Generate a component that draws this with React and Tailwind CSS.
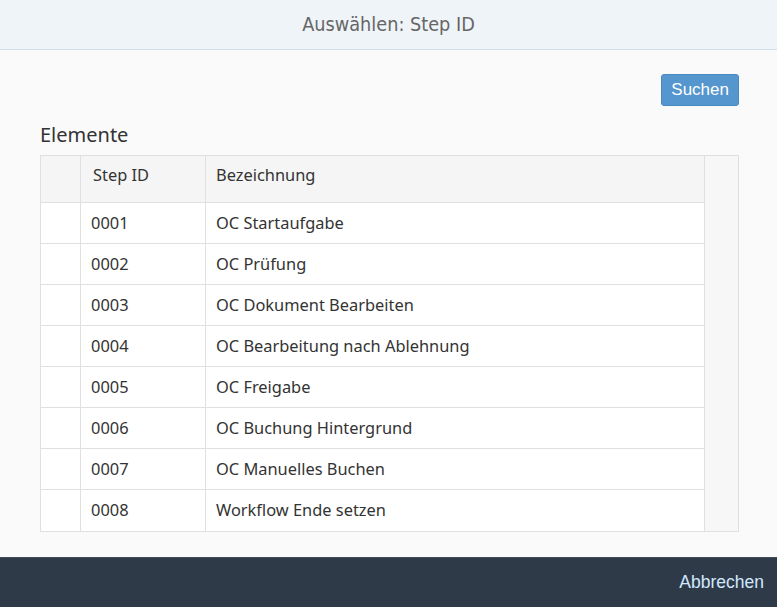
import React from "react";

const rows = [
  ["0001", "OC Startaufgabe"],
  ["0002", "OC Prüfung"],
  ["0003", "OC Dokument Bearbeiten"],
  ["0004", "OC Bearbeitung nach Ablehnung"],
  ["0005", "OC Freigabe"],
  ["0006", "OC Buchung Hintergrund"],
  ["0007", "OC Manuelles Buchen"],
  ["0008", "Workflow Ende setzen"],
];

export default function App() {
  return (
    <div
      className="w-[777px] h-[607px] flex flex-col bg-[#fafafa] overflow-hidden"
      style={{ fontFamily: '"Noto Sans", "Open Sans", sans-serif' }}
    >
      {/* Header */}
      <div className="h-[50px] shrink-0 bg-[#eff4f9] border-b border-[#d3dde8] flex items-center justify-center">
        <span
          className="text-[19.7px] text-[#666666]"
          style={{ fontFamily: '"Liberation Sans Narrow", "DejaVu Sans Condensed", "Liberation Sans", sans-serif' }}
        >
          Auswählen: Step ID
        </span>
      </div>

      {/* Body */}
      <div className="flex-1 pl-10 pr-[38px] pt-6">
        <div className="flex justify-end">
          <button
            className="h-8 px-[9px] rounded-[3px] bg-[#5496cd] border border-[#4a8ac2] text-white text-[17px]"
            style={{ fontFamily: '"Liberation Sans", Arial, sans-serif' }}
          >
            Suchen
          </button>
        </div>
        <div className="mt-[15px] text-[20px] text-[#333333] leading-[28px]">Elemente</div>
        <div className="mt-[6px] border border-[#e0e0e0] flex">
          <div className="flex-1">
            <div className="flex h-[47px] bg-[#f5f5f5] border-b border-[#e0e0e0] text-[16.4px] text-[#333333]">
              <div className="w-[40px] border-r border-[#e0e0e0]" />
              <div className="w-[125px] border-r border-[#e0e0e0] pl-3 pt-[7px]">Step ID</div>
              <div className="flex-1 border-r border-[#e0e0e0] pl-[10px] pt-[7px]">Bezeichnung</div>
            </div>
            {rows.map(([id, name], i) => (
              <div
                key={id}
                className={
                  "flex h-[41px] bg-white text-[16.4px] text-[#333333] items-center " +
                  (i < rows.length - 1 ? "border-b border-[#e0e0e0]" : "")
                }
              >
                <div className="w-[40px] h-full border-r border-[#e0e0e0]" />
                <div className="w-[125px] h-full border-r border-[#e0e0e0] pl-[10px] flex items-center">{id}</div>
                <div className="flex-1 h-full border-r border-[#e0e0e0] pl-[10px] flex items-center">{name}</div>
              </div>
            ))}
          </div>
          <div className="w-[33px] bg-[#f7f7f7]" />
        </div>
      </div>

      {/* Footer */}
      <div className="h-[50px] shrink-0 bg-[#2e3a47] border-t border-[#3f4c5a] flex items-center justify-end pr-[13px]">
        <span
          className="text-[17.5px] text-[#d1e8ff]"
          style={{ fontFamily: '"Liberation Sans", Arial, sans-serif' }}
        >
          Abbrechen
        </span>
      </div>
    </div>
  );
}
